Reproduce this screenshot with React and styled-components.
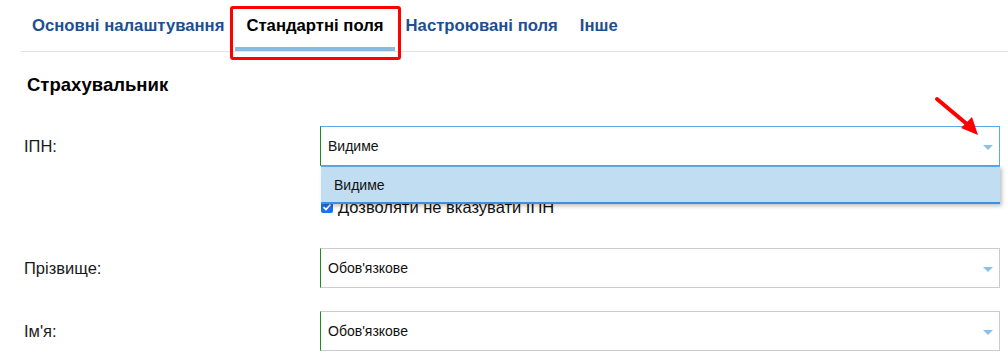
import React from 'react';
import styled, { createGlobalStyle } from 'styled-components';

const GlobalStyle = createGlobalStyle`
  body {
    margin: 0;
    background: #fff;
    font-family: "Liberation Sans", Arial, sans-serif;
  }
`;

const Page = styled.div`
  position: relative;
  width: 1008px;
  height: 363px;
  overflow: hidden;
  background: #fff;
`;

const TabBar = styled.div`
  display: flex;
  margin-left: 21px;
  height: 51px;
  border-bottom: 1px solid #e3e3e3;
`;

const Tab = styled.div`
  position: relative;
  display: flex;
  align-items: center;
  padding: 6px 11px ${p => (p.$active ? '1px' : '5px')};
  font-size: 16.7px;
  font-weight: bold;
  color: ${p => (p.$active ? '#000' : '#1d4f93')};
  border-bottom: ${p => (p.$active ? '4px solid #87bbe4' : 'none')};
  cursor: pointer;

  &::after {
    content: '';
    display: ${p => (p.$highlight ? 'block' : 'none')};
    position: absolute;
    left: -5px;
    right: -6px;
    top: 6px;
    bottom: -13px;
    border: 3px solid #ff0000;
    border-radius: 3px;
  }
`;

const Section = styled.div`
  padding: 0 8px 0 24px;
`;

const Heading = styled.h2`
  margin: 22px 0 31px 3px;
  font-size: 18.5px;
  font-weight: bold;
  color: #000;
  line-height: 21px;
`;

const Row = styled.div`
  display: grid;
  grid-template-columns: 296px 1fr;
  margin-bottom: 23px;
`;

const Label = styled.div`
  font-size: 16.5px;
  line-height: 40px;
  color: #1a1a1a;
`;

const Field = styled.div`
  position: relative;
`;

const Select = styled.div`
  display: flex;
  align-items: center;
  justify-content: space-between;
  height: 38px;
  padding: 0 6px 0 7px;
  font-size: 14px;
  color: #111;
  border: 1px solid ${p => (p.$open ? '#5ba8e6' : '#cccccc')};
  border-left: 1px solid #1e8c1e;
`;

const Caret = styled.span`
  width: 0;
  height: 0;
  border-left: 5px solid transparent;
  border-right: 5px solid transparent;
  border-top: 5px solid #8cc0e8;
  margin-top: 2px;
`;

const Menu = styled.div`
  position: absolute;
  top: 40px;
  left: 1px;
  right: 0;
  z-index: 2;
  height: 35px;
  display: flex;
  align-items: center;
  padding-left: 13px;
  font-size: 14px;
  color: #111;
  background: #c1ddf1;
  border-top: 1px solid #5ba8e6;
  border-bottom: 2px solid #3a8fe0;
  box-shadow: 2px 2px 4px rgba(0, 0, 0, 0.25);
`;

const CheckLine = styled.label`
  display: flex;
  align-items: center;
  gap: 5px;
  margin: 34px 0 11px;
  font-size: 16.5px;
  line-height: 14px;
  color: #111;
`;

const Box = styled.span`
  display: inline-flex;
  align-items: center;
  justify-content: center;
  width: 12px;
  height: 12px;
  margin-left: 1px;
  border-radius: 2px;
  background: #1a73e8;
`;

const Arrow = styled.svg`
  position: absolute;
  left: 930px;
  top: 90px;
  z-index: 3;
`;

const tabs = ['Основні налаштування', 'Стандартні поля', 'Настроювані поля', 'Інше'];

const App = () => {
  return (
    <Page>
      <GlobalStyle />
      <TabBar>
        {tabs.map((t, i) => (
          <Tab key={t} $active={i === 1} $highlight={i === 1}>
            {t}
          </Tab>
        ))}
      </TabBar>
      <Section>
        <Heading>Страхувальник</Heading>
        <Row>
          <Label>ІПН:</Label>
          <Field>
            <Select $open>
              Видиме
              <Caret />
            </Select>
            <Menu>Видиме</Menu>
            <CheckLine>
              <Box>
                <svg width="10" height="10" viewBox="0 0 10 10">
                  <path d="M1.5 5.2 L4 7.5 L8.5 2.5" stroke="#fff" strokeWidth="1.8" fill="none" />
                </svg>
              </Box>
              Дозволяти не вказувати ІПН
            </CheckLine>
          </Field>
        </Row>
        <Row>
          <Label>Прізвище:</Label>
          <Field>
            <Select>
              Обов'язкове
              <Caret />
            </Select>
          </Field>
        </Row>
        <Row>
          <Label>Ім'я:</Label>
          <Field>
            <Select>
              Обов'язкове
              <Caret />
            </Select>
          </Field>
        </Row>
      </Section>
      <Arrow width="60" height="50" viewBox="0 0 60 50">
        <line x1="7" y1="9" x2="38" y2="35" stroke="#ff0000" strokeWidth="4" strokeLinecap="round" />
        <polygon points="48,45 31,38 42,27" fill="#ff0000" />
      </Arrow>
    </Page>
  );
};

export default App;
